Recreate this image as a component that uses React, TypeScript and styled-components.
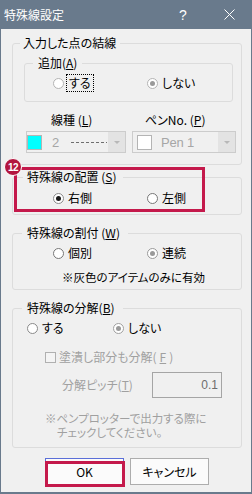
import React from "react";
import styled, { createGlobalStyle } from "styled-components";

const Global = createGlobalStyle`
  html, body { margin: 0; padding: 0; background: #f0f0f0; }
  body {
    font-family: "Noto Sans CJK JP", "Noto Sans", sans-serif;
    font-size: 12px;
    color: #000;
  }
  * { box-sizing: border-box; }
`;

const FRAME = "#697a8c";
const RED = "#c4194b";

const Window = styled.div`
  position: relative;
  width: 252px;
  height: 494px;
  display: flex;
  flex-direction: column;
  background: #f0f0f0;
  border: 1px solid ${FRAME};
  border-top: none;
  border-bottom-width: 2px;
  font-feature-settings: "palt";
`;

const TitleBar = styled.div`
  height: 29px;
  flex: none;
  margin: 0 -1px;
  background: ${FRAME};
  color: #fff;
  display: flex;
  align-items: center;
  padding-left: 4px;
`;

const TitleText = styled.div`
  flex: 1;
  font-size: 12px;
  line-height: 14px;
  font-feature-settings: normal;
`;

const CaptionButton = styled.div`
  width: 46px;
  height: 29px;
  display: flex;
  align-items: center;
  justify-content: center;
  font-family: "Liberation Sans", sans-serif;
  font-size: 14px;
  color: #fff;
`;

const Content = styled.div`
  padding: 7px 9px 0 11px;
  display: flex;
  flex-direction: column;
`;

const Group = styled.fieldset<{ $mt?: number }>`
  margin: ${(p) => p.$mt ?? 0}px 0 0 0;
  padding: 0;
  border: 1px solid #dcdcdc;
  border-radius: 3px;
  min-width: 0;
`;

const Legend = styled.legend<{ $ml: number; $pl: number; $pr: number }>`
  margin-left: ${(p) => p.$ml}px;
  padding: 0 ${(p) => p.$pr}px 0 ${(p) => p.$pl}px;
  font-size: 12px;
  line-height: 14px;
  height: 14px;
  white-space: nowrap;
`;

const GroupBody = styled.div<{ $pt: number; $pr?: number; $pb: number; $pl?: number }>`
  padding: ${(p) => p.$pt}px ${(p) => p.$pr ?? 0}px ${(p) => p.$pb}px ${(p) => p.$pl ?? 0}px;
  display: flex;
  flex-direction: column;
`;

const RadioRow = styled.div<{ $cols: string; $pl: number }>`
  display: grid;
  grid-template-columns: ${(p) => p.$cols};
  padding-left: ${(p) => p.$pl}px;
  height: 16px;
  align-items: center;
`;

const RadioItem = styled.label`
  display: flex;
  align-items: center;
  gap: 4px;
  line-height: 14px;
  white-space: nowrap;
`;

const Circle = styled.span<{ $ring?: string; $checked?: boolean; $dot?: string }>`
  width: 11px;
  height: 11px;
  flex: none;
  border-radius: 50%;
  border: 1px solid ${(p) => p.$ring ?? "#8a8a8a"};
  background: #fff;
  display: inline-flex;
  align-items: center;
  justify-content: center;
  &::after {
    content: "";
    width: 5px;
    height: 5px;
    border-radius: 50%;
    background: ${(p) => p.$dot ?? "#1a1a1a"};
    display: ${(p) => (p.$checked ? "block" : "none")};
  }
`;

const Focus = styled.span`
  outline: 1px dotted #000;
  outline-offset: 1px;
  padding: 0 1px;
`;

const ColumnsRow = styled.div<{ $mt: number }>`
  display: grid;
  grid-template-columns: 100px 104px;
  column-gap: 6px;
  margin: ${(p) => p.$mt}px 0 0 2px;
`;

const FieldLabel = styled.div<{ $pl: number }>`
  padding-left: ${(p) => p.$pl}px;
  line-height: 14px;
  height: 14px;
  white-space: nowrap;
`;

const Combo = styled.div<{ $pl: number }>`
  height: 22px;
  border: 1px solid #cccccc;
  background: #f0f0f0;
  display: flex;
  align-items: center;
  padding-left: ${(p) => p.$pl}px;
`;

const Swatch = styled.span<{ $color: string }>`
  width: 15px;
  height: 15px;
  flex: none;
  background: ${(p) => p.$color};
  border: 1px solid #b4b4b4;
`;

const ComboText = styled.span<{ $ml: number }>`
  margin-left: ${(p) => p.$ml}px;
  font-family: "Liberation Sans", sans-serif;
  font-size: 13px;
  letter-spacing: -0.2px;
  color: #a6a6a6;
  white-space: nowrap;
`;

const DashLine = styled.span`
  margin-left: 12px;
  width: 36px;
  height: 1px;
  background: repeating-linear-gradient(90deg, #6e6e6e 0 3px, transparent 3px 5px);
`;

const ComboArrow = styled.span`
  margin-left: auto;
  width: 17px;
  height: 20px;
  background: #e3e3e3;
  display: flex;
  align-items: center;
  justify-content: center;
  &::after {
    content: "";
    border-left: 3px solid transparent;
    border-right: 3px solid transparent;
    border-top: 3px solid #b8b8b8;
  }
`;

const Note = styled.div<{ $pl: number; $mt?: number; $gray?: boolean }>`
  padding-left: ${(p) => p.$pl}px;
  margin-top: ${(p) => p.$mt ?? 0}px;
  font-size: 11.5px;
  line-height: 14px;
  height: 14px;
  white-space: nowrap;
  color: ${(p) => (p.$gray ? "#a0a0a0" : "#000")};
`;

const CheckRow = styled.div<{ $mt: number }>`
  display: flex;
  align-items: center;
  gap: 3px;
  margin-top: ${(p) => p.$mt}px;
  padding-left: 32px;
  height: 14px;
  line-height: 14px;
  color: #a0a0a0;
`;

const CheckBox = styled.span`
  width: 11px;
  height: 11px;
  border: 1px solid #b0b0b0;
  background: #f4f4f4;
  flex: none;
`;

const PitchRow = styled.div<{ $mt: number }>`
  display: grid;
  grid-template-columns: 90px 70px;
  align-items: center;
  margin-top: ${(p) => p.$mt}px;
  padding-left: 49px;
  color: #a0a0a0;
  line-height: 14px;
`;

const NumberBox = styled.div`
  height: 26px;
  border: 1px solid #a5a5a5;
  background: #f0f0f0;
  display: flex;
  align-items: center;
  justify-content: flex-end;
  padding-right: 3px;
  font-family: "Liberation Sans", sans-serif;
  font-size: 12px;
  color: #6d6d6d;
`;

const ButtonRow = styled.div`
  display: flex;
  gap: 6px;
  margin-top: 10px;
  padding-left: 33px;
`;

const ButtonWrap = styled.div`
  position: relative;
`;

const Button = styled.div<{ $default?: boolean }>`
  width: 79px;
  height: 27px;
  border: 1px solid ${(p) => (p.$default ? "#5b6fd8" : "#adadad")};
  background: #fbfbfb;
  display: flex;
  align-items: center;
  justify-content: center;
  font-size: 12px;
  line-height: 14px;
`;

const OkHighlight = styled.div`
  position: absolute;
  left: 0;
  top: 3px;
  width: 80px;
  height: 26px;
  border: 3px solid ${RED};
`;

const GroupHighlight = styled.div`
  position: absolute;
  left: 13px;
  top: 167px;
  width: 191px;
  height: 45px;
  border: 3px solid ${RED};
  pointer-events: none;
`;

const Badge = styled.div`
  position: absolute;
  left: 3px;
  top: 158px;
  width: 18px;
  height: 18px;
  border-radius: 50%;
  background: #b3163f;
  border: 1px solid #fff;
  color: #fff;
  font-family: "Liberation Sans", sans-serif;
  font-weight: bold;
  font-size: 10px;
  letter-spacing: -0.5px;
  display: flex;
  align-items: center;
  justify-content: center;
`;

export default function App() {
  return (
    <>
      <Global />
      <Window>
        <TitleBar>
          <TitleText>特殊線設定</TitleText>
          <CaptionButton>?</CaptionButton>
          <CaptionButton>
            <svg width="11" height="11" viewBox="0 0 11 11">
              <path d="M0.5 0.5L10.5 10.5M10.5 0.5L0.5 10.5" stroke="#fff" strokeWidth="1" />
            </svg>
          </CaptionButton>
        </TitleBar>
        <Content>
          <Group>
            <Legend $ml={7} $pl={3} $pr={4}>入力した点の結線</Legend>
            <GroupBody $pt={6} $pr={8} $pb={11} $pl={11}>
              <Group>
                <Legend $ml={8} $pl={5} $pr={5}>
                  追加(<u>A</u>)
                </Legend>
                <GroupBody $pt={5} $pb={10}>
                  <RadioRow $cols="94px 94px" $pl={28}>
                    <RadioItem>
                      <Circle $ring="#b4b4b4" />
                      <Focus>する</Focus>
                    </RadioItem>
                    <RadioItem>
                      <Circle $ring="#b4b4b4" $checked $dot="#9a9a9a" />
                      しない
                    </RadioItem>
                  </RadioRow>
                </GroupBody>
              </Group>
              <ColumnsRow $mt={11}>
                <FieldLabel $pl={25}>
                  線種 (<u>L</u>)
                </FieldLabel>
                <FieldLabel $pl={13}>
                  ペンNo. (<u>P</u>)
                </FieldLabel>
              </ColumnsRow>
              <ColumnsRow $mt={4}>
                <Combo $pl={0}>
                  <Swatch $color="#00ffff" />
                  <ComboText $ml={10}>2</ComboText>
                  <DashLine />
                  <ComboArrow />
                </Combo>
                <Combo $pl={4}>
                  <Swatch $color="#ffffff" />
                  <ComboText $ml={9}>Pen 1</ComboText>
                  <ComboArrow />
                </Combo>
              </ColumnsRow>
            </GroupBody>
          </Group>

          <Group $mt={5}>
            <Legend $ml={10} $pl={4} $pr={6}>
              特殊線の配置 (<u>S</u>)
            </Legend>
            <GroupBody $pt={6} $pb={8}>
              <RadioRow $cols="94px 94px" $pl={40}>
                <RadioItem>
                  <Circle $ring="#8a8a8a" $checked $dot="#1a1a1a" />
                  右側
                </RadioItem>
                <RadioItem>
                  <Circle $ring="#777777" />
                  左側
                </RadioItem>
              </RadioRow>
            </GroupBody>
          </Group>

          <Group $mt={11}>
            <Legend $ml={9} $pl={5} $pr={8}>
              特殊線の割付 (<u>W</u>)
            </Legend>
            <GroupBody $pt={5} $pb={5}>
              <RadioRow $cols="94px 94px" $pl={40}>
                <RadioItem>
                  <Circle $ring="#777777" />
                  個別
                </RadioItem>
                <RadioItem>
                  <Circle $ring="#9a9a9a" $checked $dot="#9a9a9a" />
                  連続
                </RadioItem>
              </RadioRow>
              <Note $pl={49} $mt={9}>※灰色のアイテムのみに有効</Note>
            </GroupBody>
          </Group>

          <Group $mt={11}>
            <Legend $ml={9} $pl={5} $pr={8}>
              特殊線の分解(<u>B</u>)
            </Legend>
            <GroupBody $pt={5} $pb={8}>
              <RadioRow $cols="86px 94px" $pl={14}>
                <RadioItem>
                  <Circle $ring="#8a8a8a" />
                  する
                </RadioItem>
                <RadioItem>
                  <Circle $ring="#a0a0a0" $checked $dot="#9a9a9a" />
                  しない
                </RadioItem>
              </RadioRow>
              <CheckRow $mt={14}>
                <CheckBox />
                塗潰し部分も分解(<u>F</u>)
              </CheckRow>
              <PitchRow $mt={8}>
                <span>
                  分解ピッチ(<u>T</u>)
                </span>
                <NumberBox>0.1</NumberBox>
              </PitchRow>
              <Note $pl={32} $mt={13} $gray>
                ※ペンプロッターで出力する際に
              </Note>
              <Note $pl={44} $gray>
                チェックしてください。
              </Note>
            </GroupBody>
          </Group>

          <ButtonRow>
            <ButtonWrap>
              <Button $default>OK</Button>
              <OkHighlight />
            </ButtonWrap>
            <Button>キャンセル</Button>
          </ButtonRow>
        </Content>
        <GroupHighlight />
        <Badge>12</Badge>
      </Window>
    </>
  );
}
